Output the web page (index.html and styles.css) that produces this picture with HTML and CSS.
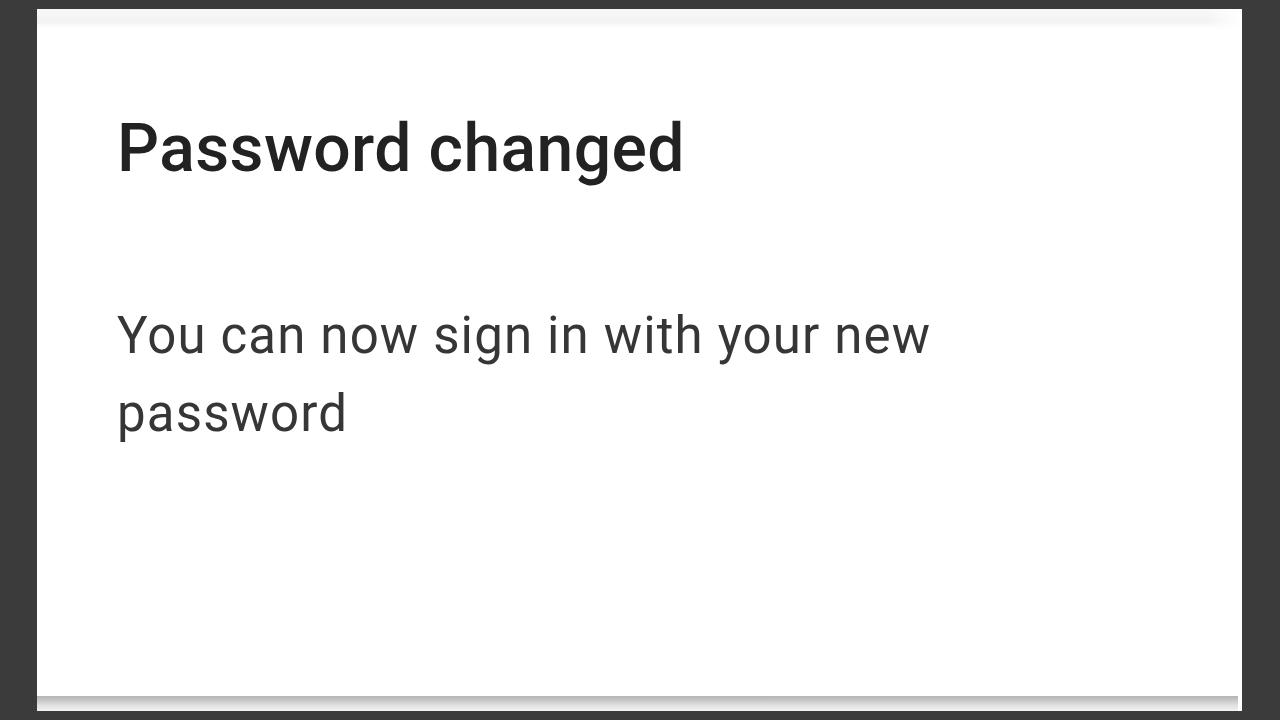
FILE: index.html
```html
<!DOCTYPE html>
<html lang="en">
<head>
<meta charset="utf-8">
<title>Password changed</title>
<link rel="stylesheet" href="styles.css">
</head>
<body>
  <div class="frame">
    <div class="top-band"></div>
    <main class="content">
      <h1 class="title">Password changed</h1>
      <p class="message">You can now sign in with your new password</p>
    </main>
    <div class="bottom-shadow"></div>
  </div>
</body>
</html>
```

FILE: styles.css
```css
* { box-sizing: border-box; }

html, body {
  margin: 0;
  padding: 0;
  width: 1280px;
  height: 720px;
  overflow: hidden;
  background: #3b3b3b;
}

body {
  padding: 9px 38px 9px 37px;
  font-family: Roboto, "Liberation Sans", Arial, sans-serif;
}

.frame {
  width: 1205px;
  height: 702px;
  background: #ffffff;
  display: flex;
  flex-direction: column;
}

.top-band {
  height: 20px;
  flex: none;
  background: linear-gradient(to bottom, #f8f8f8 0%, #f3f3f3 60%, #ffffff 100%);
  -webkit-mask-image: linear-gradient(to right, #000 0%, #000 97%, transparent 100%);
  mask-image: linear-gradient(to right, #000 0%, #000 97%, transparent 100%);
}

.content {
  flex: 1;
  padding: 0 80px;
}

.title {
  margin: 87px 0 0 0;
  font-size: 66px;
  line-height: 1;
  font-weight: 500;
  color: #222222;
  letter-spacing: 0.4px;
}

.message {
  margin: 115px 0 0 0;
  max-width: 900px;
  font-size: 51px;
  line-height: 78px;
  font-weight: 400;
  color: #363636;
  letter-spacing: 1.15px;
}

.bottom-shadow {
  height: 15px;
  flex: none;
  margin-right: 4px;
  background: linear-gradient(to bottom, #b4b4b4 0%, #c8c8c8 30%, #e0e0e0 60%, #f2f2f2 100%);
}
```
